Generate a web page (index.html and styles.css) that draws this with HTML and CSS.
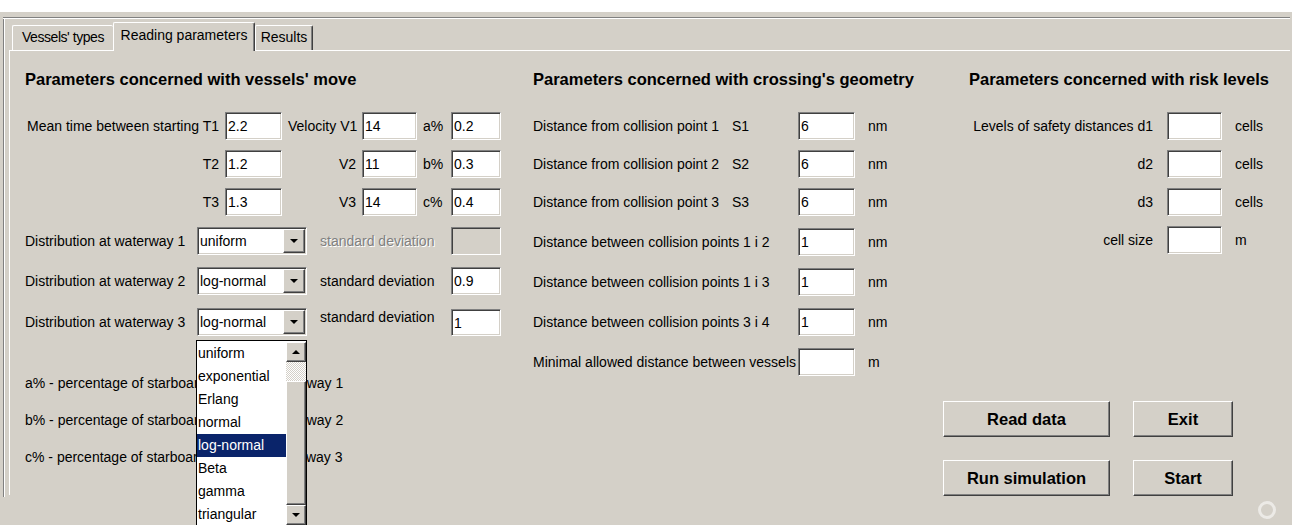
FILE: index.html
```html
<!DOCTYPE html>
<html lang="en">
<head>
<meta charset="utf-8">
<title>Reading parameters</title>
<link rel="stylesheet" href="styles.css">
</head>
<body>
<div class="topband"></div>
<div class="window">
  <div class="rule"></div>
  <div class="frame">
    <div class="tabs">
      <div class="tab tab-vessels">Vessels' types</div>
      <div class="tab tab-active">Reading parameters</div>
      <div class="tab tab-results">Results</div>
    </div>

    <div class="panel">
      <!-- vessels' move -->
      <section class="col col-move">
        <h2 class="head">Parameters concerned with vessels' move</h2>
        <div class="group g-times">
          <div class="row r-times">
            <span class="lbl right">Mean time between starting T1</span>
            <div class="field">2.2</div>
            <span class="lbl right">Velocity V1</span>
            <div class="field">14</div>
            <span class="lbl">a%</span>
            <div class="field">0.2</div>
          </div>
          <div class="row r-times">
            <span class="lbl right">T2</span>
            <div class="field">1.2</div>
            <span class="lbl right">V2</span>
            <div class="field">11</div>
            <span class="lbl">b%</span>
            <div class="field">0.3</div>
          </div>
          <div class="row r-times">
            <span class="lbl right">T3</span>
            <div class="field">1.3</div>
            <span class="lbl right">V3</span>
            <div class="field">14</div>
            <span class="lbl">c%</span>
            <div class="field">0.4</div>
          </div>
        </div>

        <div class="group g-dist">
          <div class="row r-dist">
            <span class="lbl">Distribution at waterway 1</span>
            <div class="combo"><span class="combo-val">uniform</span><span class="sbtn combo-btn"><i class="arrow-down"></i></span></div>
            <span class="lbl disabled">standard deviation</span>
            <div class="field field-off"></div>
          </div>
          <div class="row r-dist">
            <span class="lbl">Distribution at waterway 2</span>
            <div class="combo"><span class="combo-val">log-normal</span><span class="sbtn combo-btn"><i class="arrow-down"></i></span></div>
            <span class="lbl">standard deviation</span>
            <div class="field">0.9</div>
          </div>
          <div class="row r-dist">
            <span class="lbl">Distribution at waterway 3</span>
            <div class="combo combo-open">
              <span class="combo-val">log-normal</span><span class="sbtn combo-btn"><i class="arrow-down"></i></span>
              <div class="popup">
                <ul class="popup-list">
                  <li>uniform</li>
                  <li>exponential</li>
                  <li>Erlang</li>
                  <li>normal</li>
                  <li class="sel">log-normal</li>
                  <li>Beta</li>
                  <li>gamma</li>
                  <li>triangular</li>
                </ul>
                <div class="vscroll">
                  <span class="sbtn sb-arrow"><i class="arrow-up"></i></span>
                  <span class="sb-track"></span>
                  <span class="sbtn sb-thumb"></span>
                  <span class="sbtn sb-arrow"><i class="arrow-down"></i></span>
                </div>
              </div>
            </div>
            <span class="lbl up">standard deviation</span>
            <div class="field down">1</div>
          </div>
        </div>

        <div class="notes">
          <p>a% - percentage of starboard turning at waterway 1</p>
          <p>b% - percentage of starboard turning at waterway 2</p>
          <p>c% - percentage of starboard turning at waterway 3</p>
        </div>
      </section>

      <!-- crossing's geometry -->
      <section class="col col-geo">
        <h2 class="head">Parameters concerned with crossing's geometry</h2>
        <div class="group g-geo-a">
          <div class="row r-geo"><span class="lbl"><span class="lbl-main">Distance from collision point 1</span>S1</span><div class="field">6</div><span class="unit">nm</span></div>
          <div class="row r-geo"><span class="lbl"><span class="lbl-main">Distance from collision point 2</span>S2</span><div class="field">6</div><span class="unit">nm</span></div>
          <div class="row r-geo"><span class="lbl"><span class="lbl-main">Distance from collision point 3</span>S3</span><div class="field">6</div><span class="unit">nm</span></div>
        </div>
        <div class="group g-geo-b">
          <div class="row r-geo"><span class="lbl">Distance between collision points 1 i 2</span><div class="field">1</div><span class="unit">nm</span></div>
          <div class="row r-geo"><span class="lbl">Distance between collision points 1 i 3</span><div class="field">1</div><span class="unit">nm</span></div>
          <div class="row r-geo"><span class="lbl">Distance between collision points 3 i 4</span><div class="field">1</div><span class="unit">nm</span></div>
          <div class="row r-geo"><span class="lbl">Minimal allowed distance between vessels</span><div class="field"></div><span class="unit">m</span></div>
        </div>
      </section>

      <!-- risk levels + actions -->
      <section class="col col-risk">
        <h2 class="head head-risk">Parameters concerned with risk levels</h2>
        <div class="group g-risk">
          <div class="row r-risk"><span class="lbl right">Levels of safety distances d1</span><div class="field"></div><span class="unit">cells</span></div>
          <div class="row r-risk"><span class="lbl right">d2</span><div class="field"></div><span class="unit">cells</span></div>
          <div class="row r-risk"><span class="lbl right">d3</span><div class="field"></div><span class="unit">cells</span></div>
          <div class="row r-risk"><span class="lbl right">cell size</span><div class="field"></div><span class="unit">m</span></div>
        </div>
        <div class="actions">
          <button class="btn">Read data</button>
          <button class="btn">Exit</button>
          <button class="btn">Run simulation</button>
          <button class="btn">Start</button>
        </div>
      </section>
    </div>
  </div>
  <div class="busy"></div>
</div>
</body>
</html>
```

FILE: styles.css
```css
* { box-sizing: border-box; }

html, body { margin: 0; padding: 0; }

body {
  width: 1292px;
  height: 525px;
  overflow: hidden;
  background: #fff;
  font-family: "Liberation Sans", Arial, sans-serif;
  font-size: 14px;
  line-height: 16px;
  color: #000;
}

/* window chrome */
.topband { height: 12px; background: #fff; }

.window {
  position: relative;
  height: 513px;
  background: #d4d0c8;
  padding-top: 5px;
}

.rule {
  margin-left: 3px;
  width: 1287px;
  height: 2px;
  border-top: 1px solid #808080;
  border-bottom: 1px solid #fff;
}

.frame {
  margin-left: 3px;
  height: 478px;
  border-left: 1px solid #808080;
  box-shadow: inset 1px 0 0 #fff;
}

/* tab strip */
.tabs {
  height: 31px;
  display: flex;
  align-items: flex-end;
  padding-left: 8px;
}

.tab {
  height: 25px;
  padding-top: 3px;
  text-align: center;
  white-space: nowrap;
  background: #d4d0c8;
  border-top: 1px solid #fff;
  border-left: 1px solid #fff;
  border-right: 1px solid #404040;
  border-radius: 2px 2px 0 0;
  box-shadow: inset -1px 0 0 #808080;
}

.tab-vessels { width: 101px; letter-spacing: -0.45px; border-right: none; box-shadow: none; }
.tab-active {
  position: relative;
  z-index: 2;
  width: 142px;
  height: 29px;
  margin-bottom: -1px;
  padding-top: 4px;
}
.tab-results { width: 58px; }

/* tab content */
.panel {
  display: flex;
  width: 1281px;
  height: 445px;
  margin-left: 5px;
  padding: 19px 0 0 15px;
  border-top: 1px solid #fff;
  border-left: 1px solid #fff;
}

.col { display: flex; flex-direction: column; }
.col-move { width: 508px; }
.col-geo { width: 410px; }
.col-risk { flex: 1; }

.head {
  margin: 0;
  height: 19px;
  font-size: 16.5px;
  line-height: 19px;
  font-weight: bold;
  white-space: nowrap;
}
.head-risk { margin-left: 26px; }

.group { display: flex; flex-direction: column; gap: 10px; }
.g-times, .g-geo-a { margin-top: 23px; }
.g-dist { margin-top: 11px; gap: 12px; }
.g-geo-b { margin-top: 12px; gap: 12px; }
.g-risk { margin-top: 23px; margin-left: 26px; }

.row { display: grid; height: 28px; align-items: center; }

.r-times { grid-template-columns: 194px 57px 68px 55px 22px 50px; column-gap: 6px; }
.r-dist { grid-template-columns: 159px 110px 118px 50px; column-gap: 13px; }
.r-geo { grid-template-columns: 265px 57px 1fr; }
.r-risk { grid-template-columns: 198px 55px 1fr; }

.lbl { white-space: nowrap; }
.lbl.right { text-align: right; }
.r-risk .lbl { padding-right: 14px; }
.lbl-main { display: inline-block; width: 199px; }
.lbl.disabled { color: #808080; text-shadow: 1px 1px 0 #fff; }
.lbl.up { align-self: start; margin-top: 2px; }

.unit { padding-left: 13px; }

/* sunken text field */
.field {
  height: 28px;
  display: flex;
  align-items: center;
  padding: 0 2px;
  background: #fff;
  border: 1px solid;
  border-color: #808080 #fff #fff #808080;
  box-shadow: inset 1px 1px 0 #404040, inset -1px -1px 0 #d4d0c8;
  white-space: nowrap;
}
.field-off { background: #d4d0c8; }
.field.down { align-self: start; margin-top: 2px; height: 27px; }

/* raised bevel shared by buttons and scroll parts */
.sbtn {
  display: flex;
  align-items: center;
  justify-content: center;
  background: #d4d0c8;
  border: 1px solid;
  border-color: #fff #404040 #404040 #fff;
  box-shadow: inset -1px -1px 0 #808080;
}

.arrow-down, .arrow-up {
  width: 0;
  height: 0;
  border-left: 4px solid transparent;
  border-right: 4px solid transparent;
}
.arrow-down { border-top: 4px solid #000; }
.arrow-up { border-bottom: 4px solid #000; }

/* combo box */
.combo {
  position: relative;
  display: flex;
  align-items: center;
  height: 28px;
  padding: 1px;
  background: #fff;
  border: 1px solid;
  border-color: #808080 #fff #fff #808080;
  box-shadow: inset 1px 1px 0 #404040, inset -1px -1px 0 #d4d0c8;
}
.combo-val { flex: 1; padding-left: 1px; white-space: nowrap; overflow: hidden; }
.combo-btn { width: 22px; height: 24px; flex: none; }

/* open drop-down list */
.popup {
  position: absolute;
  z-index: 5;
  left: -2px;
  top: 31px;
  width: 111px;
  height: 190px;
  display: flex;
  background: #fff;
  border: 1px solid #000;
}
.popup-list {
  flex: 1;
  margin: 0;
  padding: 1px 0 0;
  list-style: none;
}
.popup-list li {
  height: 23px;
  line-height: 23px;
  padding-left: 1px;
  white-space: nowrap;
}
.popup-list li.sel { background: #0a246a; color: #fff; }

.vscroll {
  width: 20px;
  display: flex;
  flex-direction: column;
  padding-top: 1px;
}
.sb-arrow { height: 20px; flex: none; }
.sb-track {
  height: 19px;
  flex: none;
  background: repeating-conic-gradient(#fff 0 25%, #d4d0c8 0 50%) 0 0 / 2px 2px;
}
.sb-thumb { height: 124px; flex: none; }

/* explanatory notes */
.notes { margin-top: 40px; display: flex; flex-direction: column; gap: 21px; }
.notes p { margin: 0; white-space: nowrap; }

/* action buttons */
.actions {
  display: grid;
  grid-template-columns: 167px 100px;
  grid-auto-rows: 36px;
  gap: 23px;
  margin-top: 147px;
}
.btn {
  font-family: inherit;
  font-size: 16.5px;
  font-weight: bold;
  color: #000;
  padding: 0;
  background: #d4d0c8;
  border: 1px solid;
  border-color: #fff #404040 #404040 #fff;
  box-shadow: inset -1px -1px 0 #808080;
}

/* idle indicator in the corner */
.busy {
  position: absolute;
  left: 1258px;
  top: 489px;
  width: 18px;
  height: 18px;
  border: 3px solid rgba(255, 255, 255, 0.55);
  border-radius: 50%;
}
```
